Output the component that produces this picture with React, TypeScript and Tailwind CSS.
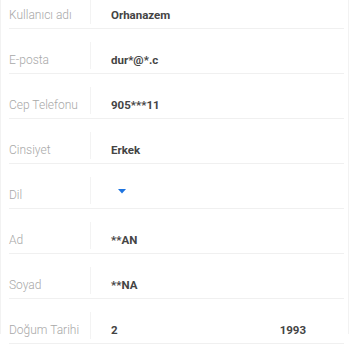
import React from "react";

const rows: { label: string; value?: string }[] = [
	{ label: "Kullanıcı adı", value: "Orhanazem" },
	{ label: "E-posta", value: "dur*@*.c" },
	{ label: "Cep Telefonu", value: "905***11" },
	{ label: "Cinsiyet", value: "Erkek" },
	{ label: "Dil" },
	{ label: "Ad", value: "**AN" },
	{ label: "Soyad", value: "**NA" },
	{ label: "Doğum Tarihi" },
];

function Row({ label, children }: { label: string; children: React.ReactNode }) {
	return (
		<div className="flex h-[45px] border-b border-[#f0f0f0]">
			<div className="w-[82px] mt-[13px] h-[27px] flex items-end pb-[1px] border-r border-[#f3f3f3]">
				<span className="text-[12px] leading-[15px] font-light text-[#a8a8a8]">{label}</span>
			</div>
			<div className="flex-1 mt-[13px] h-[27px] flex items-end pb-[2px]">{children}</div>
		</div>
	);
}

function Value({ text }: { text: string }) {
	return <span className="pl-5 text-[11.5px] leading-[14px] font-bold text-[#444444]">{text}</span>;
}

export default function App() {
	return (
		<div className="w-[350px] h-[350px] overflow-hidden bg-white font-['Roboto',sans-serif]">
			<div className="h-full border-l border-r border-[#f2f2f2] w-[349px] pl-2 pr-[4px]">
				<div className="-mt-4">
					{rows.map((r) => (
						<Row key={r.label} label={r.label}>
							{r.label === "Dil" ? (
								<div className="pl-[27px] pt-[3px] h-full flex items-center">
									<svg width="8" height="5" viewBox="0 0 8 5">
										<path d="M0 0H8L4 4.5Z" fill="#1e74e0" />
									</svg>
								</div>
							) : r.label === "Doğum Tarihi" ? (
								<div className="grid grid-cols-3 w-full">
									<Value text="2" />
									<span />
									<Value text="1993" />
								</div>
							) : (
								<Value text={r.value ?? ""} />
							)}
						</Row>
					))}
				</div>
			</div>
		</div>
	);
}
